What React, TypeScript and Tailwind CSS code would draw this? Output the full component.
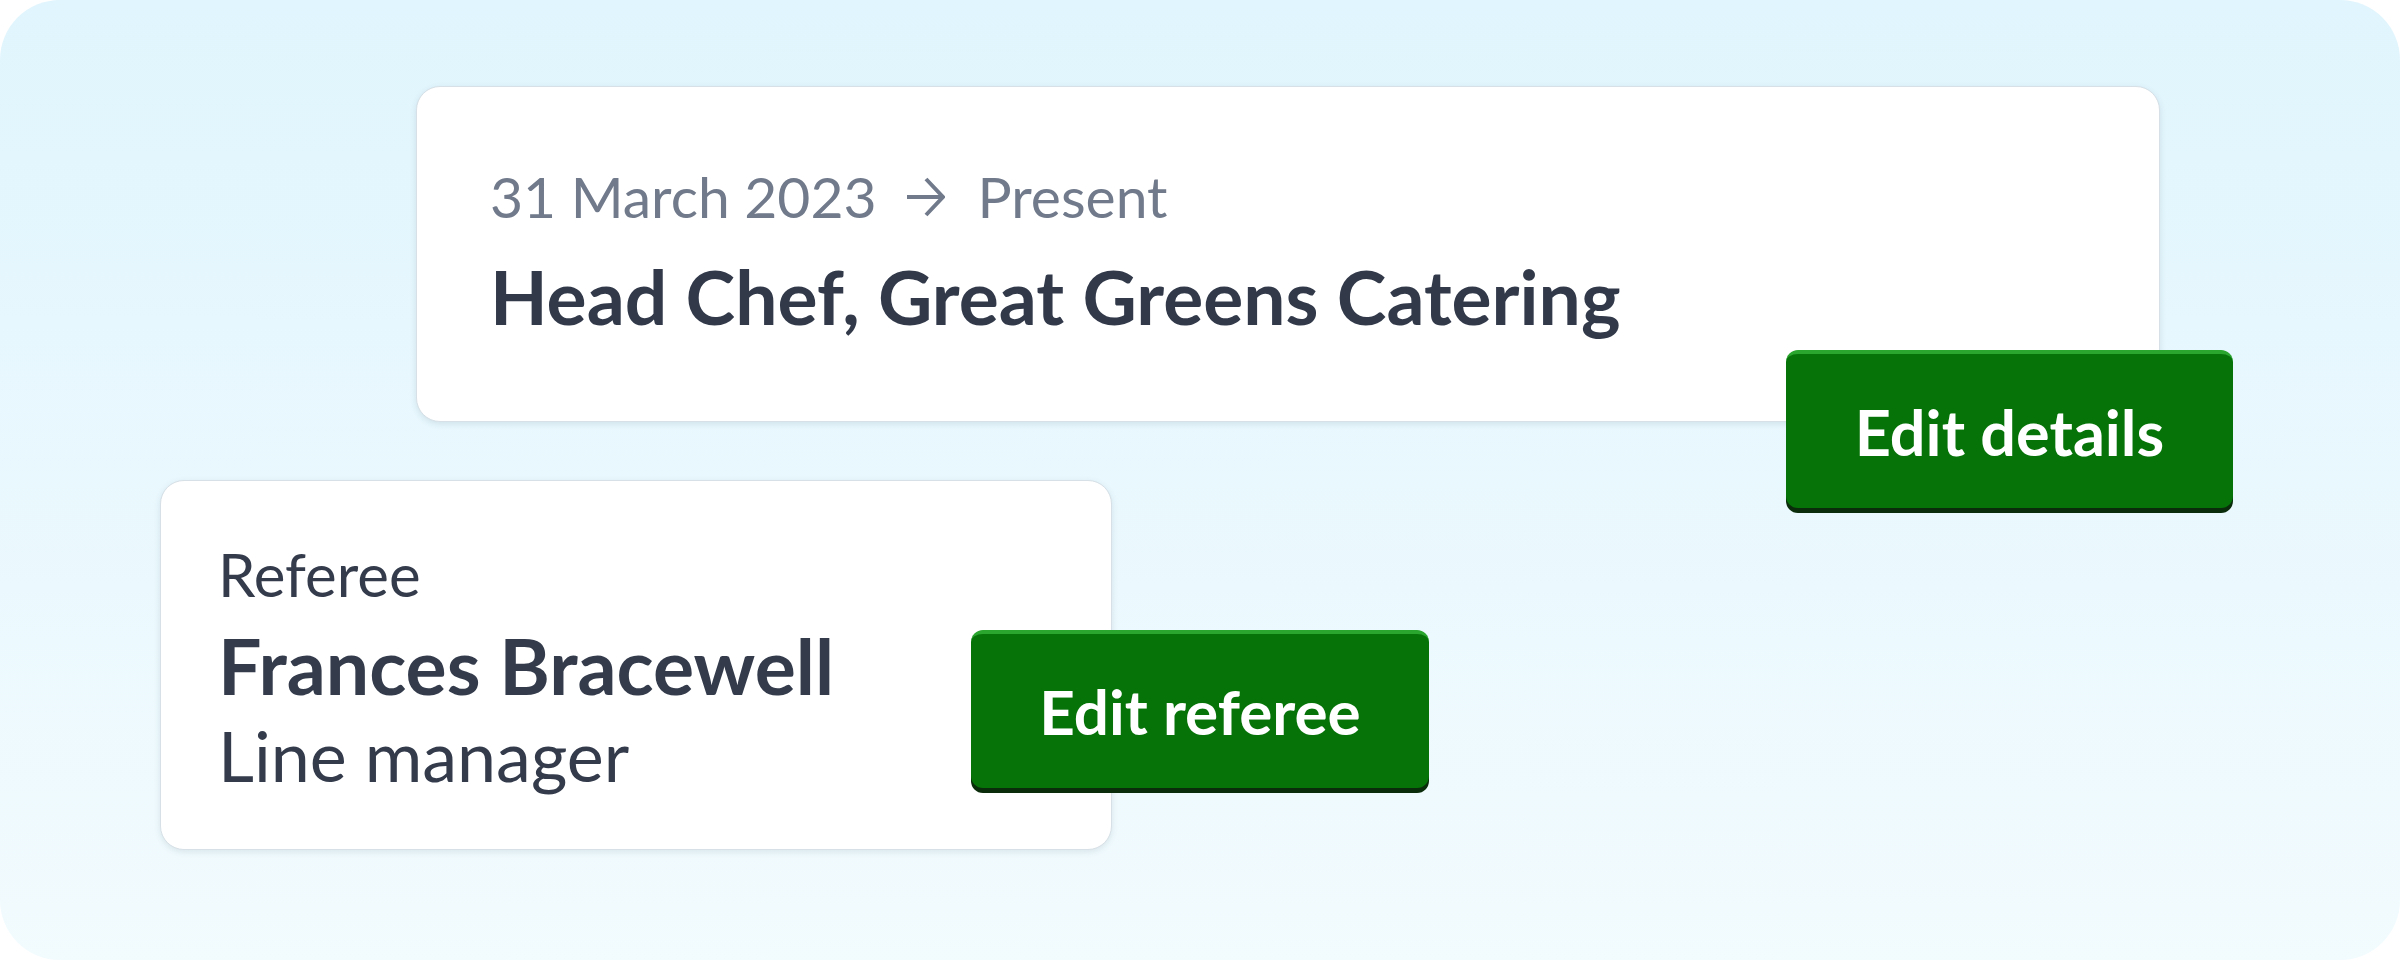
import React from "react"

interface GreenButtonProps {
  label: string
  className?: string
}

function ArrowRight() {
  return (
    <svg
      width="38"
      height="40"
      viewBox="0 0 38 40"
      fill="none"
      stroke="currentColor"
      strokeWidth="4"
      className="ml-[30px] mr-[33px] shrink-0 translate-y-[1px]"
    >
      <path d="M0 20h35" />
      <path d="M19 2l17 18-17 18" />
    </svg>
  )
}

function GreenButton({ label, className = "" }: GreenButtonProps) {
  return (
    <button
      className={`flex h-[158px] shrink-0 items-center justify-center rounded-[12px] border-t-[4px] border-[#2aa52e] bg-[#067309] font-bold leading-none text-white shadow-[0_5px_0_#0a2c0a] ${className}`}
    >
      {label}
    </button>
  )
}

export default function App() {
  return (
    <div className="h-[960px] w-[2400px] overflow-hidden rounded-[60px] bg-linear-to-b from-[#e0f5fd] to-[#f2fbfe] pt-[86px] font-['Lato',sans-serif]">
      {/* job card */}
      <div className="flex items-start">
        <div className="ml-[416px] h-[336px] w-[1744px] shrink-0 rounded-[24px] border border-[#d6e0e6] bg-white pl-[73px] pt-[75px] shadow-[0_2px_6px_rgba(40,70,90,0.12)]">
          <div className="flex items-center text-[57px] leading-[1.2] text-[#707a8b]">
            <span>31 March 2023</span>
            <ArrowRight />
            <span>Present</span>
          </div>
          <h2 className="mt-[21px] text-[75px] font-bold leading-[1.2] text-[#323a4a]">
            Head Chef, Great Greens Catering
          </h2>
        </div>
        <GreenButton label="Edit details" className="ml-[-374px] mt-[264px] w-[447px] text-[63px]" />
      </div>

      {/* referee card */}
      <div className="-mt-[28px] flex items-start">
        <div className="ml-[160px] h-[370px] w-[952px] shrink-0 rounded-[24px] border border-[#d6e0e6] bg-white pl-[57px] pt-[57px] text-[#343c4c] shadow-[0_2px_6px_rgba(40,70,90,0.12)]">
          <p className="text-[60px] leading-[1.2]">Referee</p>
          <p className="mt-[9px] text-[77px] font-bold leading-[1.2]">Frances Bracewell</p>
          <p className="mt-[2px] text-[70px] leading-[1.2]">Line manager</p>
        </div>
        <GreenButton label="Edit referee" className="ml-[-141px] mt-[150px] w-[458px] text-[62px]" />
      </div>
    </div>
  )
}
